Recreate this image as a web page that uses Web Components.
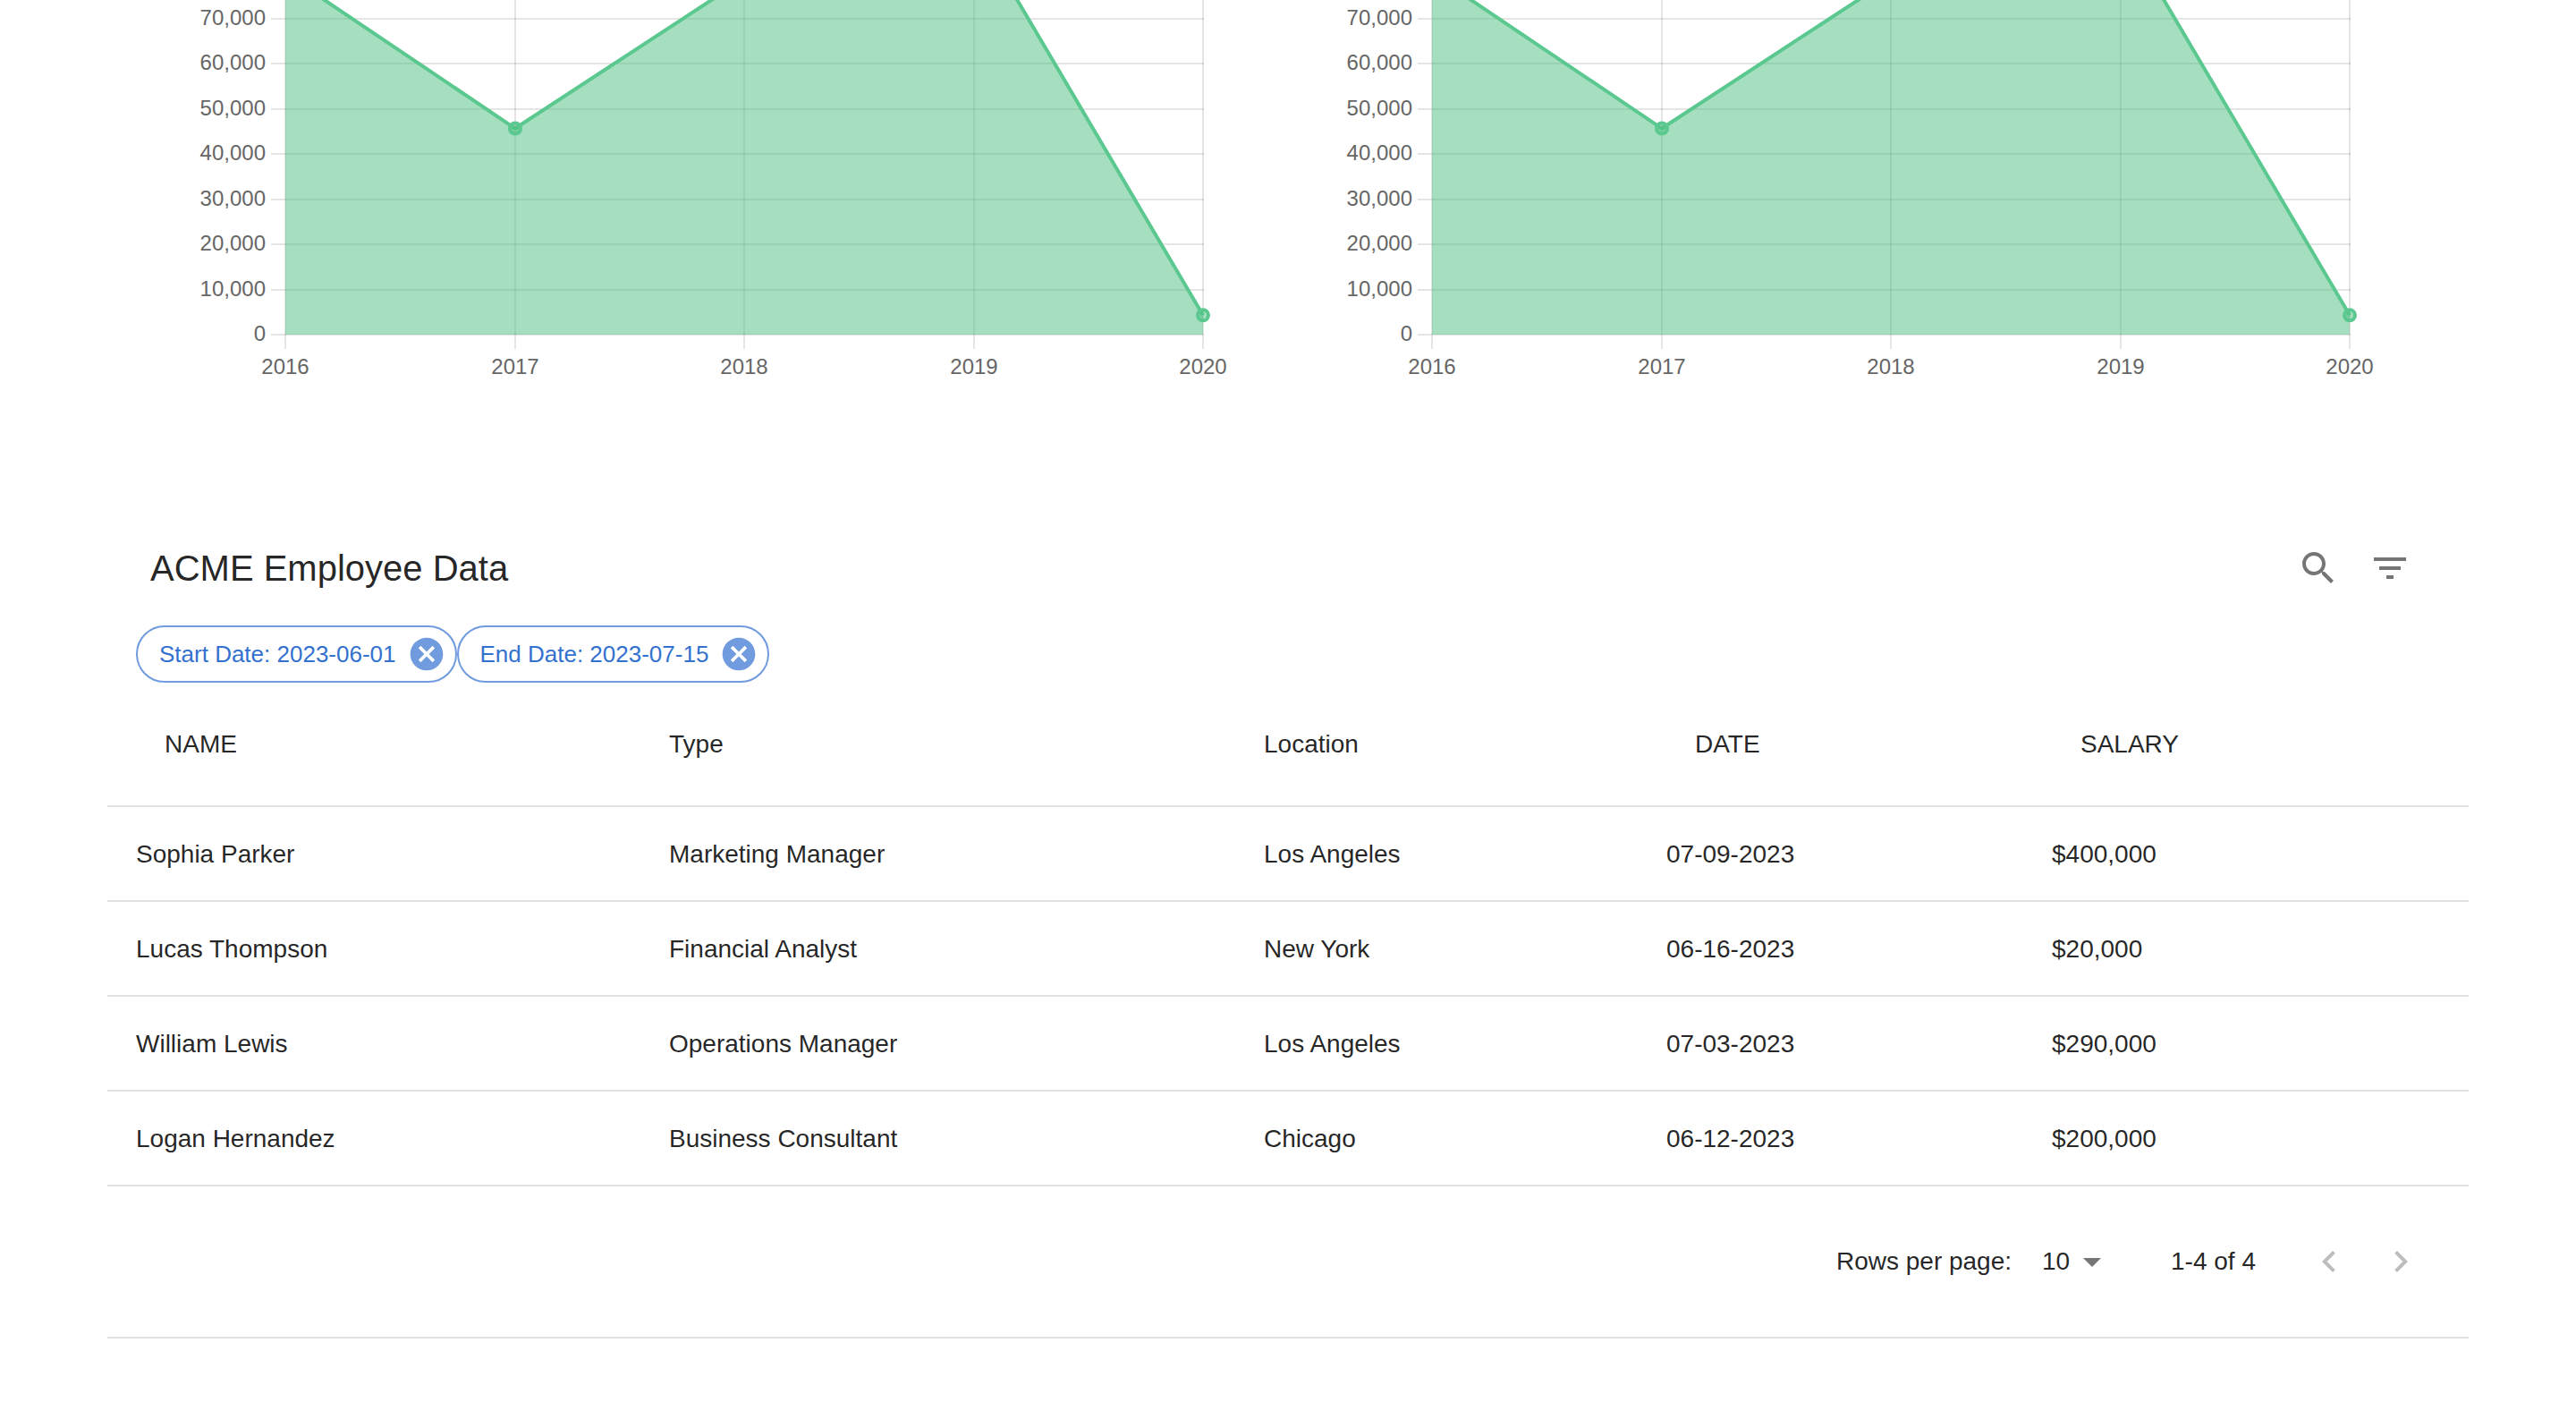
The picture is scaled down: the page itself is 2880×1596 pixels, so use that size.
<!DOCTYPE html>
<html lang="en">
<head>
<meta charset="utf-8">
<title>ACME Employee Data</title>
<style>
  body { margin: 0; background: #fff; color: rgba(0,0,0,.87); font-family: "Liberation Sans", Arial, sans-serif; font-size: 28px; line-height: 40px; }
</style>
</head>
<body>
<acme-dashboard></acme-dashboard>

<template id="dashboard-template">
  <style>
    :host { display: block; }
    .charts { display: flex; gap: 120px; padding: 0 226px 136px 210px; }
    .charts area-chart { flex: 1; min-width: 0; }
    main { padding: 0 120px; }
  </style>
  <section class="charts">
    <area-chart label="Left area chart, 2016 to 2020"></area-chart>
    <area-chart label="Right area chart, 2016 to 2020"></area-chart>
  </section>
  <main>
    <data-toolbar>ACME Employee Data</data-toolbar>
    <filter-list>
      <filter-chip>Start Date: 2023-06-01</filter-chip>
      <filter-chip>End Date: 2023-07-15</filter-chip>
    </filter-list>
    <employee-table></employee-table>
    <table-pager></table-pager>
  </main>
</template>

<template id="chart-template">
  <style>
    :host { display: block; }
    svg { display: block; width: 100%; height: auto; overflow: hidden; }
    text { font-size: 24px; fill: #666; }
    .y text { text-anchor: end; }
    .x text { text-anchor: middle; }
    .grid { stroke: rgba(0,0,0,.1); stroke-width: 2; fill: none; }
    .area { fill: rgba(75,192,128,.5); }
    .line { fill: none; stroke: #5ac88f; stroke-width: 4; stroke-linejoin: round; }
    .dot { fill: rgba(75,192,128,.5); stroke: #5ac88f; stroke-width: 4; }
  </style>
  <svg viewBox="0 0 1162 435" role="img">
    <g class="grid"></g>
    <g class="y"></g>
    <g class="x"></g>
    <path class="area"/>
    <path class="line"/>
    <g class="dots"></g>
  </svg>
</template>

<template id="icon-button-template">
  <style>
    :host { display: block; }
    button { display: flex; padding: 16px; border: 0; border-radius: 50%; background: none; color: rgba(0,0,0,.54); cursor: pointer; }
    button:disabled { color: rgba(0,0,0,.26); cursor: default; }
    svg { width: 48px; height: 48px; fill: currentColor; }
  </style>
  <button type="button"><svg viewBox="0 0 24 24" aria-hidden="true"><path/></svg></button>
</template>

<template id="toolbar-template">
  <style>
    :host { display: flex; align-items: center; height: 128px; padding: 0 48px; }
    h1 { flex: 1; margin: 0; font-size: 40px; line-height: 64px; font-weight: 400; }
  </style>
  <h1><slot></slot></h1>
  <icon-button icon="search" label="Search"></icon-button>
  <icon-button icon="filter" label="Filter table"></icon-button>
</template>

<template id="filter-list-template">
  <style>
    :host { display: flex; flex-wrap: wrap; padding: 0 32px; }
  </style>
  <slot></slot>
</template>

<template id="chip-template">
  <style>
    :host { display: flex; align-items: center; box-sizing: border-box; height: 64px; padding: 0 10px 0 24px; gap: 12px; border: 2px solid #709bde; border-radius: 32px; color: #3371cf; font-size: 26px; }
    button { display: flex; padding: 0; border: 0; background: none; color: #709bde; cursor: pointer; }
    svg { width: 44px; height: 44px; fill: currentColor; }
  </style>
  <span><slot></slot></span>
  <button type="button" aria-label="Remove filter"><svg viewBox="0 0 24 24" aria-hidden="true"><path d="M12 2C6.47 2 2 6.47 2 12s4.47 10 10 10 10-4.47 10-10S17.53 2 12 2zm5 13.59L15.59 17 12 13.41 8.41 17 7 15.59 10.59 12 7 8.41 8.41 7 12 10.59 15.59 7 17 8.41 13.41 12 17 15.59z"/></svg></button>
</template>

<template id="table-template">
  <style>
    :host { display: block; }
    table { width: 100%; table-layout: fixed; border-collapse: separate; border-spacing: 0; }
    .name { width: 596px; } .type { width: 665px; } .location { width: 450px; } .date { width: 431px; } .salary { width: 498px; }
    th, td { padding: 33px 32px 31px; text-align: left; font-weight: 400; border-bottom: 2px solid #e0e0e0; }
    th { padding: 49px 32px 48px; }
    th button { display: block; padding: 0 32px; border: 0; background: none; color: inherit; font: inherit; text-transform: uppercase; cursor: pointer; }
  </style>
  <table>
    <colgroup><col class="name"><col class="type"><col class="location"><col class="date"><col class="salary"></colgroup>
    <thead><tr>
      <th scope="col"><button type="button">Name</button></th>
      <th scope="col">Type</th>
      <th scope="col">Location</th>
      <th scope="col"><button type="button">Date</button></th>
      <th scope="col"><button type="button">Salary</button></th>
    </tr></thead>
    <tbody></tbody>
  </table>
</template>

<template id="pager-template">
  <style>
    :host { display: flex; align-items: center; justify-content: flex-end; height: 168px; padding: 0 36px; border-bottom: 2px solid #e0e0e0; }
    .field { display: flex; align-items: center; gap: 34px; }
    .select { display: grid; align-items: center; }
    select, .select svg { grid-area: 1 / 1; }
    select { appearance: none; width: 80px; height: 48px; margin: 0; padding: 0; border: 0; background: none; color: inherit; font: inherit; cursor: pointer; }
    .select svg { justify-self: end; width: 48px; height: 48px; fill: rgba(0,0,0,.54); pointer-events: none; }
    .range { padding: 0 42px 0 64px; }
  </style>
  <div class="field">
    <label for="rows">Rows per page:</label>
    <span class="select">
      <select id="rows"><option>10</option><option>15</option><option>100</option></select>
      <svg viewBox="0 0 24 24" aria-hidden="true"><path d="M7 10l5 5 5-5z"/></svg>
    </span>
  </div>
  <span class="range">1-4 of 4</span>
  <icon-button icon="previous" label="Previous page" disabled></icon-button>
  <icon-button icon="next" label="Next page" disabled></icon-button>
</template>

<script>
  class TemplateElement extends HTMLElement {
    constructor(templateId) {
      super();
      this.attachShadow({ mode: "open" }).append(document.getElementById(templateId).content.cloneNode(true));
    }
  }

  const define = (name, templateId) =>
    customElements.define(name, class extends TemplateElement {
      constructor() { super(templateId); }
    });

  const ICONS = {
    search: "M15.5 14h-.79l-.28-.27C15.41 12.59 16 11.11 16 9.5 16 5.91 13.09 3 9.5 3S3 5.91 3 9.5 5.91 16 9.5 16c1.61 0 3.09-.59 4.23-1.57l.27.28v.79l5 4.99L20.49 19l-4.99-5zm-6 0C7.01 14 5 11.99 5 9.5S7.01 5 9.5 5 14 7.01 14 9.5 11.99 14 9.5 14z",
    filter: "M10 18h4v-2h-4v2zM3 6v2h18V6H3zm3 7h12v-2H6v2z",
    previous: "M15.41 7.41L14 6l-6 6 6 6 1.41-1.41L10.83 12z",
    next: "M10 6L8.59 7.41 13.17 12l-4.58 4.59L10 18l6-6z"
  };

  customElements.define("icon-button", class extends TemplateElement {
    constructor() { super("icon-button-template"); }
    connectedCallback() {
      const button = this.shadowRoot.querySelector("button");
      button.setAttribute("aria-label", this.getAttribute("label"));
      button.disabled = this.hasAttribute("disabled");
      this.shadowRoot.querySelector("path").setAttribute("d", ICONS[this.getAttribute("icon")]);
    }
  });

  customElements.define("area-chart", class extends TemplateElement {
    constructor() { super("chart-template"); }
    connectedCallback() {
      const root = this.shadowRoot;
      const years = [2016, 2017, 2018, 2019, 2020];
      const values = [80000, 45700, 78900, 90400, 4300];
      const left = 109, right = 1135, base = 374;
      const x = i => Math.round(left + i * (right - left) / 4);
      const y = v => base - v * 353 / 70000;
      root.querySelector("svg").setAttribute("aria-label", this.getAttribute("label"));

      let grid = "", yLabels = "", xLabels = "";
      for (let v = 0; v <= 70000; v += 10000) {
        const row = Math.round(y(v));
        grid += `<path d="M${left - 16} ${row}H${right + 1}"/>`;
        yLabels += `<text x="87" y="${row + 7}">${v.toLocaleString("en-US")}</text>`;
      }
      years.forEach((year, i) => {
        grid += `<path d="M${x(i)} 0V${base + 16}"/>`;
        xLabels += `<text x="${x(i)}" y="418">${year}</text>`;
      });
      root.querySelector(".grid").innerHTML = grid;
      root.querySelector(".y").innerHTML = yLabels;
      root.querySelector(".x").innerHTML = xLabels;

      const points = values.map((v, i) => `${x(i)} ${y(v)}`);
      root.querySelector(".line").setAttribute("d", "M" + points.join("L"));
      root.querySelector(".area").setAttribute("d", `M${points.join("L")}V${base}H${left}Z`);
      root.querySelector(".dots").innerHTML = values.map((v, i) => `<circle class="dot" cx="${x(i)}" cy="${y(v)}" r="6"/>`).join("");
    }
  });

  customElements.define("employee-table", class extends TemplateElement {
    constructor() {
      super("table-template");
      const employees = [
        ["Sophia Parker", "Marketing Manager", "Los Angeles", "07-09-2023", "$400,000"],
        ["Lucas Thompson", "Financial Analyst", "New York", "06-16-2023", "$20,000"],
        ["William Lewis", "Operations Manager", "Los Angeles", "07-03-2023", "$290,000"],
        ["Logan Hernandez", "Business Consultant", "Chicago", "06-12-2023", "$200,000"]
      ];
      this.shadowRoot.querySelector("tbody").innerHTML = employees
        .map(cells => `<tr>${cells.map(cell => `<td>${cell}</td>`).join("")}</tr>`).join("");
    }
  });

  define("data-toolbar", "toolbar-template");
  define("filter-list", "filter-list-template");
  define("filter-chip", "chip-template");
  define("table-pager", "pager-template");
  define("acme-dashboard", "dashboard-template");
</script>
</body>
</html>
